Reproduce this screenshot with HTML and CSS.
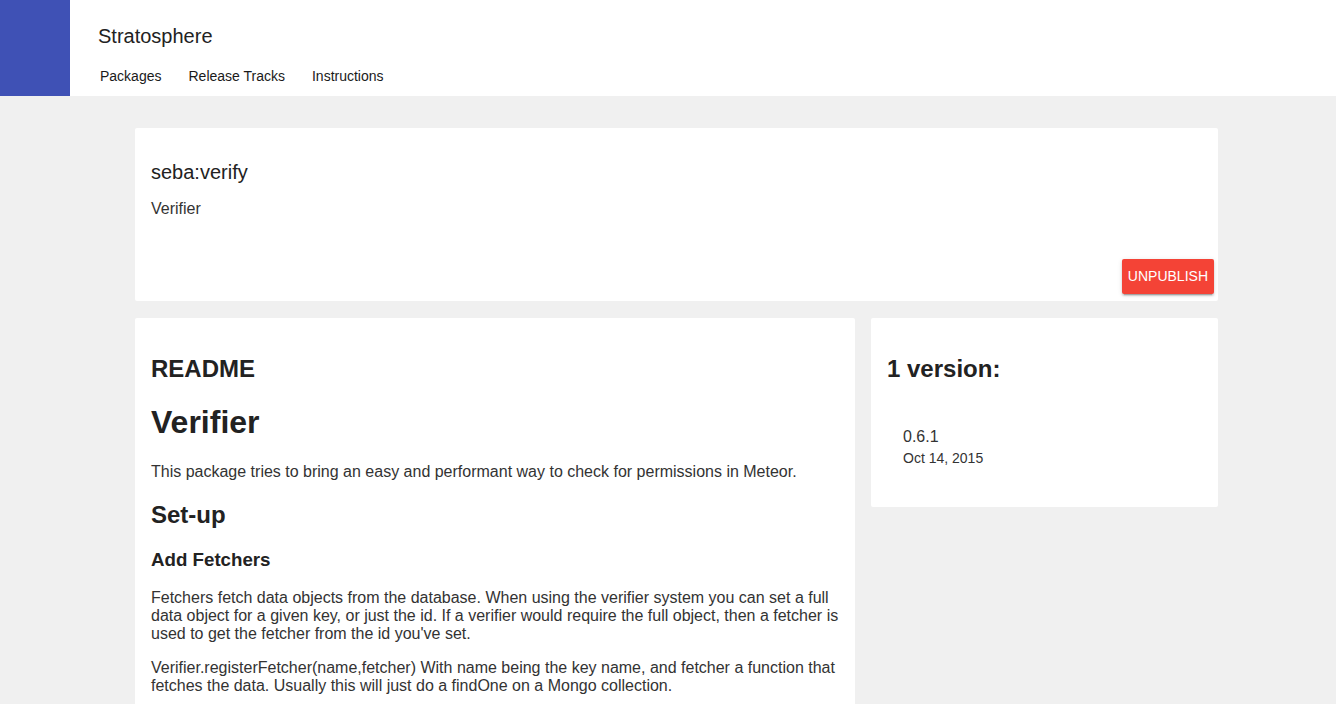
FILE: index.html
```html
<!DOCTYPE html>
<html lang="en">
<head>
<meta charset="utf-8">
<title>seba:verify - Stratosphere</title>
<link rel="stylesheet" href="styles.css">
</head>
<body>
<header class="topbar">
  <div class="brand-block"></div>
  <div class="topbar-content">
    <div class="site-title">Stratosphere</div>
    <nav class="site-nav">
      <a href="#" class="nav-link">Packages</a>
      <a href="#" class="nav-link">Release Tracks</a>
      <a href="#" class="nav-link">Instructions</a>
    </nav>
  </div>
</header>

<main class="page">
  <section class="card card-package">
    <div class="package-head">
      <div class="package-name">seba:verify</div>
      <div class="package-summary">Verifier</div>
    </div>
    <div class="package-actions">
      <button class="btn btn-danger">UNPUBLISH</button>
    </div>
  </section>

  <div class="columns">
    <section class="card card-readme">
      <h2 class="section-title">README</h2>
      <div class="markdown">
        <h1>Verifier</h1>
        <p>This package tries to bring an easy and performant way to check for permissions in Meteor.</p>
        <h2>Set-up</h2>
        <h3>Add Fetchers</h3>
        <p>Fetchers fetch data objects from the database. When using the verifier system you can set a full data object for a given key, or just the id. If a verifier would require the full object, then a fetcher is used to get the fetcher from the id you've set.</p>
        <p>Verifier.registerFetcher(name,fetcher) With name being the key name, and fetcher a function that fetches the data. Usually this will just do a findOne on a Mongo collection.</p>
      </div>
    </section>

    <aside class="card card-versions">
      <h2 class="section-title">1 version:</h2>
      <ul class="version-list">
        <li class="version-item">
          <div class="version-number">0.6.1</div>
          <div class="version-date">Oct 14, 2015</div>
        </li>
      </ul>
    </aside>
  </div>
</main>
</body>
</html>
```

FILE: styles.css
```css
* { box-sizing: border-box; }

html, body {
  margin: 0;
  padding: 0;
}

body {
  background: #f0f0f0;
  font-family: "Liberation Sans", Arial, sans-serif;
  color: #222222;
  min-height: 704px;
}

/* Header */
.topbar {
  display: flex;
  height: 96px;
  background: #ffffff;
}

.brand-block {
  width: 70px;
  background: #3f51b5;
  flex: none;
}

.topbar-content {
  padding: 25px 0 0 28px;
}

.site-title {
  font-size: 20px;
  line-height: 23px;
  color: #222222;
}

.site-nav {
  display: flex;
  gap: 27px;
  margin-top: 20px;
  padding-left: 2px;
}

.nav-link {
  font-size: 14px;
  line-height: 16px;
  color: #1a1a1a;
  text-decoration: none;
}

/* Page */
.page {
  width: 1083px;
  margin-left: 135px;
  padding-top: 32px;
}

.card {
  background: #ffffff;
  border-radius: 2px;
}

.card-package {
  padding: 16px 0 7px 16px;
  display: flex;
  flex-direction: column;
}

.package-name {
  margin-top: 17px;
  font-size: 20px;
  line-height: 23px;
  color: #222222;
}

.package-summary {
  margin-top: 16px;
  font-size: 16px;
  line-height: 18px;
  color: #333333;
}

.package-actions {
  display: flex;
  justify-content: flex-end;
  margin-top: 41px;
  padding-right: 4px;
}

.btn {
  font-family: "Liberation Sans", Arial, sans-serif;
  font-size: 14px;
  line-height: 35px;
  height: 35px;
  padding: 0 6px;
  border: none;
  border-radius: 2px;
  cursor: pointer;
}

.btn-danger {
  background: #f44336;
  color: #ffffff;
  box-shadow: 0 2px 2px 0 rgba(0,0,0,0.14), 0 1px 5px 0 rgba(0,0,0,0.12), 0 3px 1px -2px rgba(0,0,0,0.2);
}

.columns {
  display: flex;
  align-items: flex-start;
  gap: 16px;
  margin-top: 17px;
}

.card-readme {
  width: 720px;
  padding: 17px 16px 16px;
  flex: none;
}

.card-versions {
  width: 347px;
  padding: 17px 0 16px 16px;
  flex: none;
}

.section-title {
  font-size: 24px;
  font-weight: bold;
  margin: 19.92px 0;
  color: #222222;
}

.markdown h1 {
  font-size: 32px;
  margin: 21.44px 0;
}

.markdown h2 {
  font-size: 24px;
  margin: 19.92px 0;
}

.markdown h3 {
  font-size: 18.72px;
  margin: 18.72px 0;
}

.markdown p {
  font-size: 16px;
  margin: 16px 0;
  color: #333333;
}

.version-list {
  list-style: none;
  margin: 0;
  padding: 0;
}

.version-item {
  padding: 25px 16px;
}

.version-number {
  font-size: 16px;
  line-height: 18px;
  color: #333333;
}

.version-date {
  margin-top: 4px;
  font-size: 14px;
  line-height: 16px;
  color: #333333;
}
```
